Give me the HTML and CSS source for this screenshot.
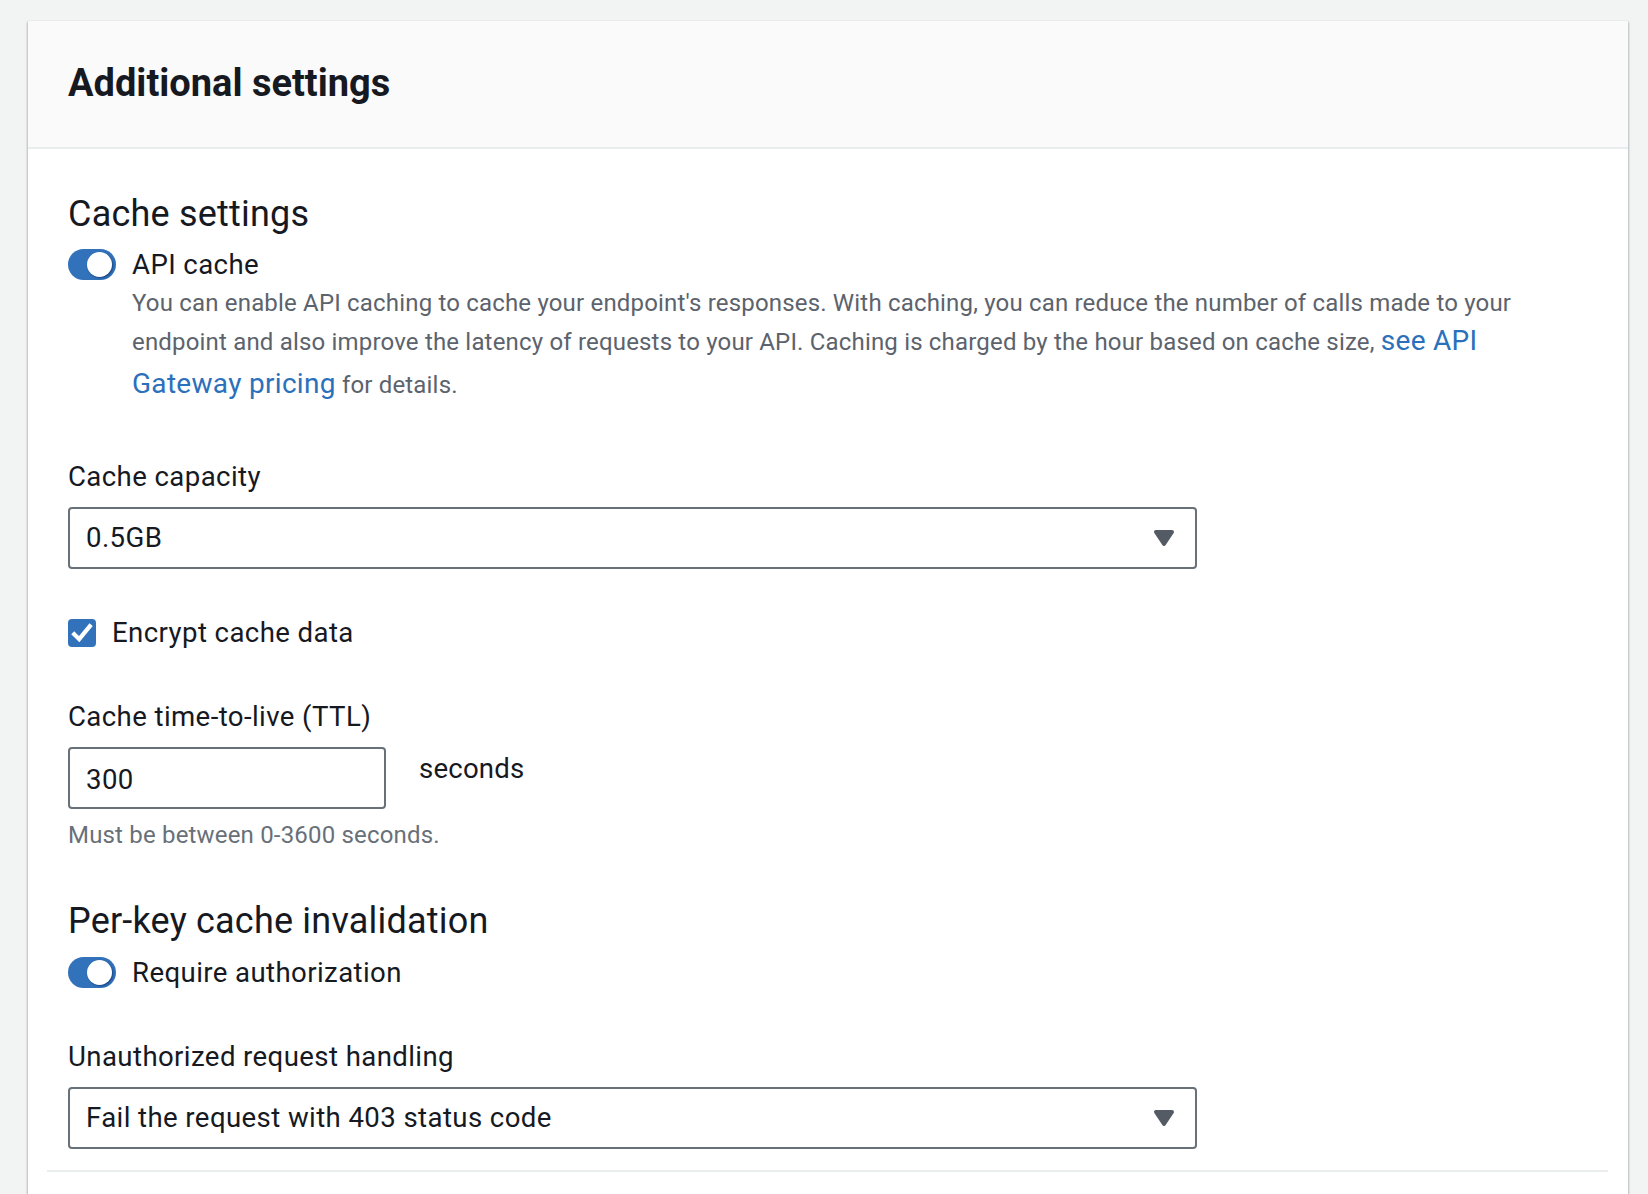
FILE: index.html
```html
<!DOCTYPE html>
<html lang="en">
<head>
<meta charset="utf-8">
<title>Additional settings</title>
<link rel="stylesheet" href="styles.css">
</head>
<body>
<div class="card">
  <div class="card-header">
    <h2 class="card-title">Additional settings</h2>
  </div>
  <div class="card-body">
    <h3 class="section-title first">Cache settings</h3>
    <div class="toggle-row">
      <span class="toggle"><span class="knob"></span></span>
      <div class="toggle-content">
        <div class="toggle-label">API cache</div>
        <p class="desc">You can enable API caching to cache your endpoint's responses. With caching, you can reduce the number of calls made to your<br>endpoint and also improve the latency of requests to your API. Caching is charged by the hour based on cache size, <a class="link" href="#">see API<br>Gateway pricing</a> for details.</p>
      </div>
    </div>

    <div class="field field-after-desc">
      <div class="label">Cache capacity</div>
      <div class="select">
        <span class="select-value">0.5GB</span>
        <svg class="caret" viewBox="0 0 16 16" width="32" height="32"><path d="M4 5h8l-4 6-4-6z"/></svg>
      </div>
    </div>

    <div class="checkbox-row">
      <span class="checkbox"><svg viewBox="0 0 14 14" width="28" height="28"><polyline points="3.1,7.6 5.6,10.1 10.9,3.6"/></svg></span>
      <span class="checkbox-label">Encrypt cache data</span>
    </div>

    <div class="field">
      <div class="label">Cache time-to-live (TTL)</div>
      <div class="input-row">
        <div class="input">300</div>
        <span class="unit">seconds</span>
      </div>
      <div class="hint">Must be between 0-3600 seconds.</div>
    </div>

    <h3 class="section-title second">Per-key cache invalidation</h3>
    <div class="toggle-row toggle-row-2">
      <span class="toggle"><span class="knob"></span></span>
      <div class="toggle-content">
        <div class="toggle-label">Require authorization</div>
      </div>
    </div>

    <div class="field">
      <div class="label">Unauthorized request handling</div>
      <div class="select">
        <span class="select-value">Fail the request with 403 status code</span>
        <svg class="caret" viewBox="0 0 16 16" width="32" height="32"><path d="M4 5h8l-4 6-4-6z"/></svg>
      </div>
    </div>
  </div>
  <div class="divider"></div>
  <div class="card-tail"></div>
</div>
</body>
</html>
```

FILE: styles.css
```css
html, body {
  margin: 0;
  padding: 0;
}

body {
  background: #f2f3f3;
  padding: 21px 20px 0 28px;
  height: 1194px;
  box-sizing: border-box;
  overflow: hidden;
  font-family: Roboto, "Liberation Sans", sans-serif;
  color: #16191f;
}

.card {
  background: #ffffff;
  box-shadow: 0 1px 2px rgba(0, 28, 36, 0.25), 1px 1px 2px rgba(0, 28, 36, 0.15), -1px 1px 2px rgba(0, 28, 36, 0.15);
}

.card-header {
  background: #fafafa;
  padding: 39px 40px 41px;
  border-bottom: 2px solid #eaeded;
}

.card-title {
  margin: 0;
  font-size: 38px;
  line-height: 46px;
  font-weight: 700;
  color: #16191f;
}

.card-body {
  padding: 0 40px;
}

.section-title {
  margin: 0;
  font-size: 36px;
  line-height: 44px;
  font-weight: 400;
  letter-spacing: 0.2px;
}

.section-title.first {
  margin-top: 43px;
}

.section-title.second {
  margin-top: 48px;
}

.toggle-row {
  display: flex;
  align-items: flex-start;
  gap: 16px;
  margin-top: 9px;
}

.toggle-row-2 {
  margin-top: 10px;
}

.toggle {
  flex: none;
  position: relative;
  width: 48px;
  height: 31px;
  margin-top: 4px;
  border-radius: 16px;
  background: #3172ba;
}

.knob {
  position: absolute;
  top: 3px;
  right: 4px;
  width: 25px;
  height: 25px;
  border-radius: 50%;
  background: #ffffff;
  box-shadow: 1px 1px 2px rgba(0, 20, 70, 0.5);
}

.toggle-content {
  flex: 1;
}

.toggle-label {
  font-size: 27.6px;
  line-height: 40px;
  letter-spacing: 0.4px;
}

.desc {
  margin: 2px 0 0;
  font-size: 24px;
  line-height: 32px;
  letter-spacing: 0.18px;
  color: #5c636c;
}

.link {
  font-size: 28px;
  line-height: 43px;
  letter-spacing: 0.3px;
  color: #2b70bb;
  text-decoration: none;
}

.field {
  margin-top: 44px;
}

.field-after-desc {
  margin-top: 52px;
}

.label {
  font-size: 27.6px;
  line-height: 40px;
  letter-spacing: 0.4px;
  margin-bottom: 10px;
}

.select {
  box-sizing: border-box;
  width: 1129px;
  height: 62px;
  border: 2px solid #687078;
  border-radius: 4px;
  padding: 0 15px 0 16px;
  display: flex;
  align-items: center;
  justify-content: space-between;
}

.select-value {
  font-size: 27.6px;
  line-height: 40px;
  letter-spacing: 0.4px;
}

.caret {
  flex: none;
}

.caret path {
  fill: #545b64;
  stroke: #545b64;
  stroke-width: 2;
  stroke-linejoin: round;
}

.checkbox-row {
  display: flex;
  align-items: center;
  gap: 16px;
  margin-top: 44px;
}

.checkbox {
  flex: none;
  width: 28px;
  height: 28px;
  border-radius: 4px;
  background: #3172ba;
  display: flex;
}

.checkbox polyline {
  fill: none;
  stroke: #ffffff;
  stroke-width: 2.1;
  stroke-linecap: square;
}

.checkbox-label {
  font-size: 27.6px;
  line-height: 40px;
  letter-spacing: 0.4px;
}

.input-row {
  display: flex;
  align-items: flex-start;
  gap: 33px;
}

.input {
  box-sizing: border-box;
  width: 318px;
  height: 62px;
  border: 2px solid #687078;
  border-radius: 4px;
  padding: 4px 16px 0;
  display: flex;
  align-items: center;
  font-size: 27.6px;
  line-height: 40px;
  letter-spacing: 0.4px;
}

.unit {
  padding-top: 2px;
  font-size: 27.6px;
  line-height: 40px;
  letter-spacing: 0.2px;
}

.hint {
  margin-top: 10px;
  font-size: 24px;
  line-height: 32px;
  letter-spacing: 0.18px;
  color: #687078;
}

.divider {
  margin: 21px 20px 0 19px;
  height: 2px;
  background: #eaeded;
}

.card-tail {
  height: 80px;
}
```
